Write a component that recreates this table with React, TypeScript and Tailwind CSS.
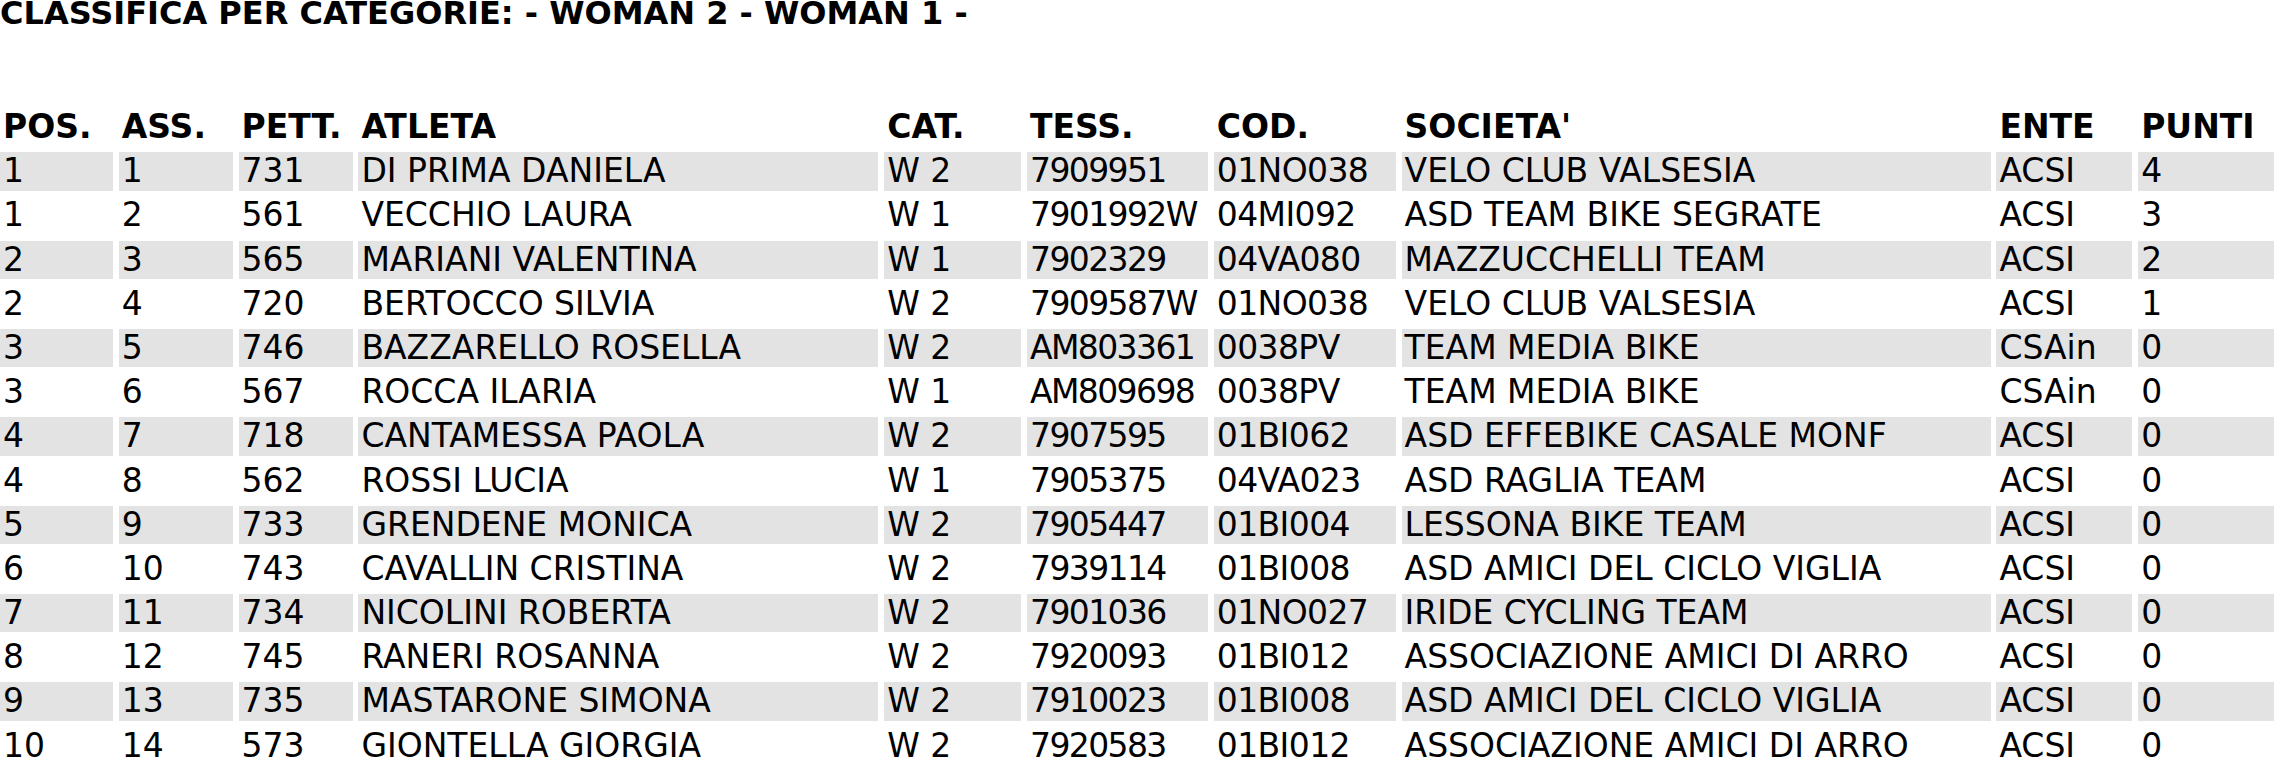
import React from "react";

const cols = ["POS.", "ASS.", "PETT.", "ATLETA", "CAT.", "TESS.", "COD.", "SOCIETA'", "ENTE", "PUNTI"];

const rows: string[][] = [
  ["1", "1", "731", "DI PRIMA DANIELA", "W 2", "7909951", "01NO038", "VELO CLUB VALSESIA", "ACSI", "4"],
  ["1", "2", "561", "VECCHIO LAURA", "W 1", "7901992W", "04MI092", "ASD TEAM BIKE SEGRATE", "ACSI", "3"],
  ["2", "3", "565", "MARIANI VALENTINA", "W 1", "7902329", "04VA080", "MAZZUCCHELLI TEAM", "ACSI", "2"],
  ["2", "4", "720", "BERTOCCO SILVIA", "W 2", "7909587W", "01NO038", "VELO CLUB VALSESIA", "ACSI", "1"],
  ["3", "5", "746", "BAZZARELLO ROSELLA", "W 2", "AM803361", "0038PV", "TEAM MEDIA BIKE", "CSAin", "0"],
  ["3", "6", "567", "ROCCA ILARIA", "W 1", "AM809698", "0038PV", "TEAM MEDIA BIKE", "CSAin", "0"],
  ["4", "7", "718", "CANTAMESSA PAOLA", "W 2", "7907595", "01BI062", "ASD EFFEBIKE CASALE MONF", "ACSI", "0"],
  ["4", "8", "562", "ROSSI LUCIA", "W 1", "7905375", "04VA023", "ASD RAGLIA TEAM", "ACSI", "0"],
  ["5", "9", "733", "GRENDENE MONICA", "W 2", "7905447", "01BI004", "LESSONA BIKE TEAM", "ACSI", "0"],
  ["6", "10", "743", "CAVALLIN CRISTINA", "W 2", "7939114", "01BI008", "ASD AMICI DEL CICLO VIGLIA", "ACSI", "0"],
  ["7", "11", "734", "NICOLINI ROBERTA", "W 2", "7901036", "01NO027", "IRIDE CYCLING TEAM", "ACSI", "0"],
  ["8", "12", "745", "RANERI ROSANNA", "W 2", "7920093", "01BI012", "ASSOCIAZIONE AMICI DI ARRO", "ACSI", "0"],
  ["9", "13", "735", "MASTARONE SIMONA", "W 2", "7910023", "01BI008", "ASD AMICI DEL CICLO VIGLIA", "ACSI", "0"],
  ["10", "14", "573", "GIONTELLA GIORGIA", "W 2", "7920583", "01BI012", "ASSOCIAZIONE AMICI DI ARRO", "ACSI", "0"],
];

const grid =
  "grid grid-cols-[113px_114px_114px_520px_137px_181px_182px_589px_136px_1fr] gap-x-[5.8px]";

const tracking = (j: number) =>
  j === 5 ? " tracking-[-1.6px]" : j === 6 ? " tracking-[-0.6px]" : "";

export default function App() {
  return (
    <div className="w-[2274px] h-[759px] overflow-hidden bg-white text-black font-['DejaVu_Sans',sans-serif]">
      <h1 className="text-[32px] leading-[26px] font-bold whitespace-nowrap">
        CLASSIFICA PER CATEGORIE: - WOMAN 2 - WOMAN 1 -
      </h1>
      <div className="mt-[82px] flex flex-col gap-y-[5.8px]">
        <div className={grid}>
          {cols.map((c) => (
            <div key={c} className="h-[38.4px] px-[3px] text-[33px] leading-[38.4px] font-bold whitespace-nowrap">
              {c}
            </div>
          ))}
        </div>
        {rows.map((r, i) => (
          <div key={i} className={grid}>
            {r.map((v, j) => (
              <div
                key={j}
                className={
                  "h-[38.4px] px-[3px] text-[33px] leading-[38.4px] whitespace-nowrap " +
                  (i % 2 === 0 ? "bg-[#e3e3e3]" : "bg-white") +
                  tracking(j)
                }
              >
                {v}
              </div>
            ))}
          </div>
        ))}
      </div>
    </div>
  );
}
